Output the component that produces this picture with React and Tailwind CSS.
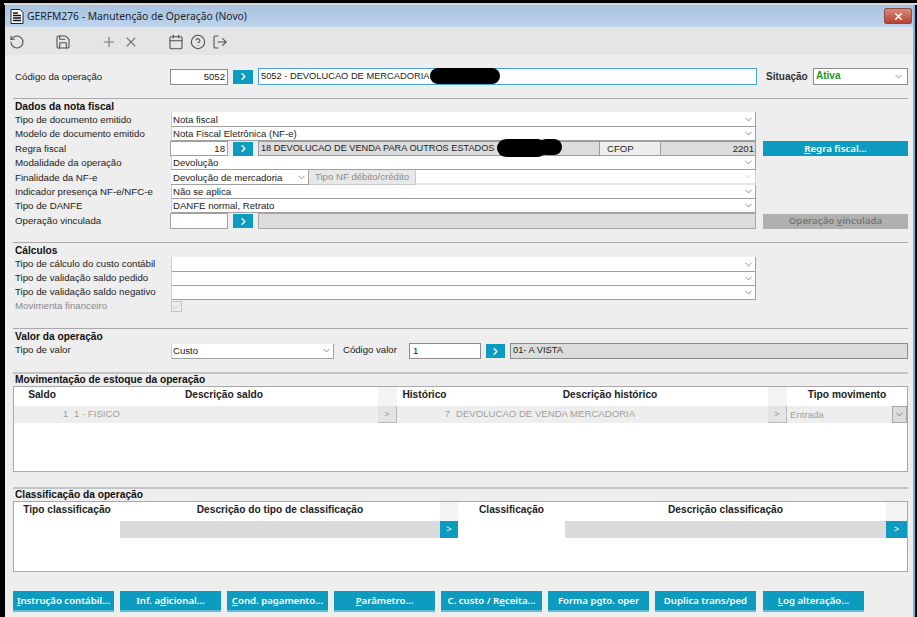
import React from "react";
import { RotateCcw, Save, Plus, X, Calendar, CircleHelp, LogOut, ChevronDown, ChevronRight, Check } from "lucide-react";

const Chev = ({ className = "text-[#555]" }) => <ChevronDown size={11} strokeWidth={1.4} className={`shrink-0 ${className}`} />;

const Go = ({ w = "w-[20px]" }) => (
  <div className={`${w} h-[14px] shrink-0 bg-[#0d9bc0] flex items-center justify-center`}>
    <ChevronRight size={11} strokeWidth={3} className="text-white" />
  </div>
);

const Label = ({ children, muted, low }) => (
  <div className={`w-[158px] shrink-0 pl-[2px] text-[9.7px] whitespace-nowrap ${low ? "" : "pb-[2px]"} ${muted ? "text-[#8a8a8a]" : "text-[#222]"}`}>{children}</div>
);

const SelectRow = ({ label, value, h = "h-[14px]", low }) => (
  <div className={`flex ${h} items-center`}>
    <Label low={low}>{label}</Label>
    <div className="w-[585px] h-full bg-white border-b border-r border-l border-[#a0a0a0] border-l-[#cfcfcf] flex items-center justify-between pl-[1px] pr-[1px] text-[#222]">
      <span className="pt-[1px]">{value}</span>
      <Chev />
    </div>
  </div>
);

const SectionHead = ({ title, heavy, extra }) => (
  <div className={extra ? "mb-[1px]" : ""}>
    <div className={`${heavy ? "h-[2px] bg-[#c4c4c4]" : "h-px bg-[#a8a8a8]"} w-[895px]`} />
    <div className={`font-bold text-[#111] pl-[2px] text-[10.2px] ${heavy ? "leading-[12px]" : "leading-[14px] mt-[1px] -mb-[2px]"}`}>{title}</div>
  </div>
);

const Btn = ({ children, className = "" }) => (
  <div className={`w-[101px] h-[21px] bg-[#0d9bc0] border-b-2 border-[#62bdd8] flex items-center justify-center whitespace-nowrap text-white text-[9.6px] font-semibold [font-family:'Noto_Sans',sans-serif] ${className}`}>
    {children}
  </div>
);

const Head = ({ children, className = "" }) => (
  <div className={`h-[19px] pb-[2px] bg-white flex items-center justify-center font-bold text-[10.2px] text-[#222] ${className}`}>{children}</div>
);

const TitleIcon = () => (
  <svg width="14" height="15" viewBox="0 0 14 15" className="shrink-0">
    <path d="M1 .5h9l3 3v11H1z" fill="#fff" stroke="#222" />
    <path d="M3 4h5M3 6.5h8M3 9h8M3 11.5h8" stroke="#111" strokeWidth="1.3" />
  </svg>
);

export default function App() {
  return (
    <div className="w-[917px] h-[617px] bg-black overflow-hidden text-[9.6px] leading-none [font-family:'Liberation_Sans',Arial,sans-serif]">
      <div className="h-[3px]" />
      <div className="h-[2px] ml-[4px] bg-[#d8d8d8]" />
      <div className="ml-[5px] w-[910px] h-[612px] border-r-2 border-[#5cc3ee] flex flex-col bg-[#eeeeee]">
        <div className="h-[22px] shrink-0 bg-gradient-to-b from-[#a9c2de] to-[#bcd4ec] flex items-center pl-[5px] pr-[1px] gap-[3px]">
          <TitleIcon />
          <span className="text-[10.3px] pt-[1px] text-[#1c2430] [font-family:'Noto_Sans',sans-serif]">GERFM276 - Manutenção de Operação (Novo)</span>
          <div className="ml-auto w-[28px] h-[16px] rounded-[2px] bg-gradient-to-b from-[#d58a7e] to-[#b8402f] border border-[#8e4a45] flex items-center justify-center">
            <X size={11} strokeWidth={3.5} className="text-white" />
          </div>
        </div>
        <div className="h-[28px] shrink-0 bg-[#e5e5e5] flex items-center pl-[4px] pt-[1px] text-[#4f4f4f]">
          <RotateCcw size={16} strokeWidth={1.6} />
          <Save size={16} strokeWidth={1.6} className="ml-[30px]" />
          <Plus size={16} strokeWidth={1.6} className="ml-[30px] text-[#777]" />
          <X size={16} strokeWidth={1.6} className="ml-[6px] text-[#777]" />
          <Calendar size={16} strokeWidth={1.6} className="ml-[29px]" />
          <CircleHelp size={16} strokeWidth={1.6} className="ml-[6px]" />
          <LogOut size={16} strokeWidth={1.6} className="ml-[6px]" />
        </div>

        <div className="flex-1 pl-[8px] relative">
          {/* top row */}
          <div className="flex items-center h-[17px] mt-[13px] relative">
            <Label low>Código da operação</Label>
            <div className="w-[58px] h-[16px] -ml-[1px] bg-white border border-[#8c8c8c] flex items-center justify-end pr-[2px] text-[#222]">5052</div>
            <div className="ml-[5px]"><Go /></div>
            <div className="ml-[5px] w-[499px] h-[17px] bg-white border border-[#4ba3dc] flex items-center pl-[2px] text-[9.3px] text-[#222]">5052 - DEVOLUCAO DE MERCADORIA</div>
            <div className="ml-[9px] w-[47px] pt-[1px] font-bold text-[10px] text-[#333]">Situação</div>
            <div className="w-[95px] h-[17px] bg-white border border-[#8c8c8c] flex items-center justify-between pl-[2px] pr-[3px]">
              <span className="text-[#1a9a1a] font-bold text-[10px] pb-[1px]">Ativa</span>
              <Chev />
            </div>
            <div className="absolute left-[417px] top-0 w-[70px] h-[16px] rounded-full bg-black" />
          </div>

          {/* dados */}
          <div className="mt-[13px]"><SectionHead title="Dados da nota fiscal" /></div>
          <SelectRow low label="Tipo de documento emitido" value="Nota fiscal" h="h-[15px]" />
          <SelectRow low label="Modelo de documento emitido" value="Nota Fiscal Eletrônica (NF-e)" />
          <div className="flex h-[15px] items-center relative">
            <Label low>Regra fiscal</Label>
            <div className="w-[58px] h-full -ml-[1px] bg-white border border-[#a0a0a0] flex items-center justify-end pr-[2px] text-[#222]">18</div>
            <div className="ml-[5px]"><Go /></div>
            <div className="ml-[5px] w-[342px] h-full bg-[#dcdcdc] border border-[#9a9a9a] flex items-center pl-[2px] text-[9.2px] text-[#222]">18 DEVOLUCAO DE VENDA PARA OUTROS ESTADOS</div>
            <div className="w-[61px] h-full bg-[#eeeeee] border-y border-r border-[#a0a0a0] flex items-center pl-[7px] text-[#222]">CFOP</div>
            <div className="w-[95px] h-full bg-[#dcdcdc] border-y border-r border-[#9a9a9a] flex items-center justify-end pr-[1px] text-[#222]">2201</div>
            <div className="ml-[7px] w-[145px] h-full bg-[#0d9bc0] flex items-center justify-center text-white font-semibold text-[9.7px] [font-family:'Noto_Sans',sans-serif]"><span><u>R</u>egra fiscal...</span></div>
            <div className="absolute left-[484px] -top-[2px] w-[50px] h-[18px] rounded-full bg-black" />
            <div className="absolute left-[525px] -top-[2px] w-[24px] h-[16px] rounded-full bg-black" />
          </div>
          <SelectRow low label="Modalidade da operação" value="Devolução" />
          <div className="flex h-[15px] items-center">
            <Label low>Finalidade da NF-e</Label>
            <div className="w-[138px] h-full bg-white border-b border-r border-[#a0a0a0] flex items-center justify-between pl-[2px] pr-[1px] text-[#222]"><span className="pt-[1px]">Devolução de mercadoria</span><Chev /></div>
            <div className="w-[107px] h-full bg-[#e8e8e8] border-r border-b border-[#c8c8c8] flex items-center justify-center text-[#8d8d8d]">Tipo NF débito/crédito</div>
            <div className="w-[340px] h-full bg-white border-b-2 border-[#e6e6e6] border-r border-r-[#d0d0d0] flex items-center justify-end pr-[1px]"><Chev className="text-[#bbb]" /></div>
          </div>
          <SelectRow low label="Indicador presença NF-e/NFC-e" value="Não se aplica" />
          <SelectRow low label="Tipo de DANFE" value="DANFE normal, Retrato" h="h-[14px]" />
          <div className="flex h-[16px] items-center">
            <Label low>Operação vinculada</Label>
            <div className="w-[58px] h-full -ml-[1px] bg-white border border-[#a0a0a0]" />
            <div className="ml-[5px]"><Go /></div>
            <div className="ml-[5px] w-[498px] h-full bg-[#dcdcdc] border border-[#a8a8a8]" />
            <div className="ml-[7px] w-[145px] h-[15px] bg-[#b0b0b0] flex items-center justify-center text-[#777] font-semibold text-[9.7px] [font-family:'Noto_Sans',sans-serif]"><span>Operação <u>v</u>inculada</span></div>
          </div>

          {/* calculos */}
          <div className="mt-[13px]"><SectionHead title="Cálculos" extra /></div>
          <SelectRow label="Tipo de cálculo do custo contábil" value="" h="h-[15px]" />
          <SelectRow label="Tipo de validação saldo pedido" value="" />
          <SelectRow label="Tipo de validação saldo negativo" value="" />
          <div className="flex h-[13px] items-center">
            <Label muted>Movimenta financeiro</Label>
            <div className="w-[11px] h-[11px] border border-[#c4c4c4] flex items-center justify-center">
              <Check size={10} strokeWidth={1.5} className="text-[#aaa]" />
            </div>
          </div>

          {/* valor */}
          <div className="mt-[15px]"><SectionHead title="Valor da operação" extra /></div>
          <div className="flex h-[16px] items-center">
            <Label>Tipo de valor</Label>
            <div className="w-[163px] h-[15px] bg-white border-b border-r border-l border-[#a0a0a0] border-l-[#cfcfcf] flex items-center justify-between pl-[1px] pr-[1px] text-[#222]"><span>Custo</span><Chev /></div>
            <div className="ml-[9px] w-[66px] text-[#222] pb-[2px]">Código valor</div>
            <div className="w-[72px] h-[16px] bg-white border border-[#8c8c8c] flex items-center pl-[3px] text-[#222]">1</div>
            <div className="ml-[5px]"><Go w="w-[19px]" /></div>
            <div className="ml-[5px] w-[398px] h-[16px] bg-[#dcdcdc] border border-[#8c8c8c] flex items-center pl-[2px] text-[9.3px] text-[#222]">01- A VISTA</div>
          </div>

          {/* estoque */}
          <div className="mt-[13px]"><SectionHead title="Movimentação de estoque da operação" heavy /></div>
          <div className="w-[895px] h-[86px] bg-white border border-[#a8a8a8] grid grid-cols-[56px_308px_19px_55px_316px_19px_1fr] content-start">
            <Head>Saldo</Head>
            <Head>Descrição saldo</Head>
            <div className="bg-[#f4f4f4] h-[19px]" />
            <Head>Histórico</Head>
            <Head>Descrição histórico</Head>
            <div className="bg-[#f4f4f4] h-[19px]" />
            <Head>Tipo movimento</Head>
            <div className="h-[17px] pb-[2px] bg-[#eeeeee] text-[#a0a0a0] flex items-center justify-end pr-[2px]">1</div>
            <div className="h-[17px] pb-[2px] bg-[#eeeeee] text-[#a0a0a0] flex items-center pl-[4px]">1 - FISICO</div>
            <div className="h-[17px] bg-[#e4e4e4] border-b border-r border-[#b8b8b8] text-[#999] flex items-center justify-center text-[9px]">&gt;</div>
            <div className="h-[17px] pb-[2px] bg-[#eeeeee] text-[#a0a0a0] flex items-center justify-end pr-[2px]">7</div>
            <div className="h-[17px] pb-[2px] bg-[#eeeeee] text-[#a0a0a0] flex items-center pl-[4px]">DEVOLUCAO DE VENDA MERCADORIA</div>
            <div className="h-[17px] bg-[#e4e4e4] border-b border-r border-[#b8b8b8] text-[#999] flex items-center justify-center text-[9px]">&gt;</div>
            <div className="h-[17px] bg-[#eeeeee] text-[#a0a0a0] flex items-center justify-between pl-[3px]">
              <span>Entrada</span>
              <div className="w-[15px] h-full bg-[#dcdcdc] border border-[#a8a8a8] flex items-center justify-center"><Chev /></div>
            </div>
          </div>

          {/* classificacao */}
          <div className="mt-[15px]"><SectionHead title="Classificação da operação" heavy /></div>
          <div className="w-[895px] h-[71px] bg-white border border-[#a8a8a8] grid grid-cols-[106px_320px_18px_107px_321px_1fr] content-start">
            <Head>Tipo classificação</Head>
            <Head>Descrição do tipo de classificação</Head>
            <div className="bg-[#f4f4f4] h-[19px]" />
            <Head>Classificação</Head>
            <Head>Descrição classificação</Head>
            <div className="bg-[#f4f4f4] h-[19px]" />
            <div className="h-[17px] bg-white" />
            <div className="h-[17px] bg-[#dbdbdb]" />
            <div className="h-[17px] bg-[#0d9bc0] text-white flex items-center justify-center text-[9px]">&gt;</div>
            <div className="h-[17px] bg-white" />
            <div className="h-[17px] bg-[#dbdbdb]" />
            <div className="h-[17px] bg-[#0d9bc0] text-white flex items-center justify-center text-[9px]">&gt;</div>
          </div>

          {/* buttons */}
          <div className="flex gap-[6px] mt-[19px]">
            <Btn><span><u>I</u>nstrução contábil...</span></Btn>
            <Btn><span>Inf. a<u>d</u>icional...</span></Btn>
            <Btn><span><u>C</u>ond. pagamento...</span></Btn>
            <Btn><span><u>P</u>arâmetro...</span></Btn>
            <Btn><span>C. custo / R<u>e</u>ceita...</span></Btn>
            <Btn><span>Forma pgto. oper</span></Btn>
            <Btn><span>Duplica trans/ped</span></Btn>
            <Btn className="ml-[1px]"><span><u>L</u>og alteração...</span></Btn>
          </div>
        </div>
      </div>
    </div>
  );
}
